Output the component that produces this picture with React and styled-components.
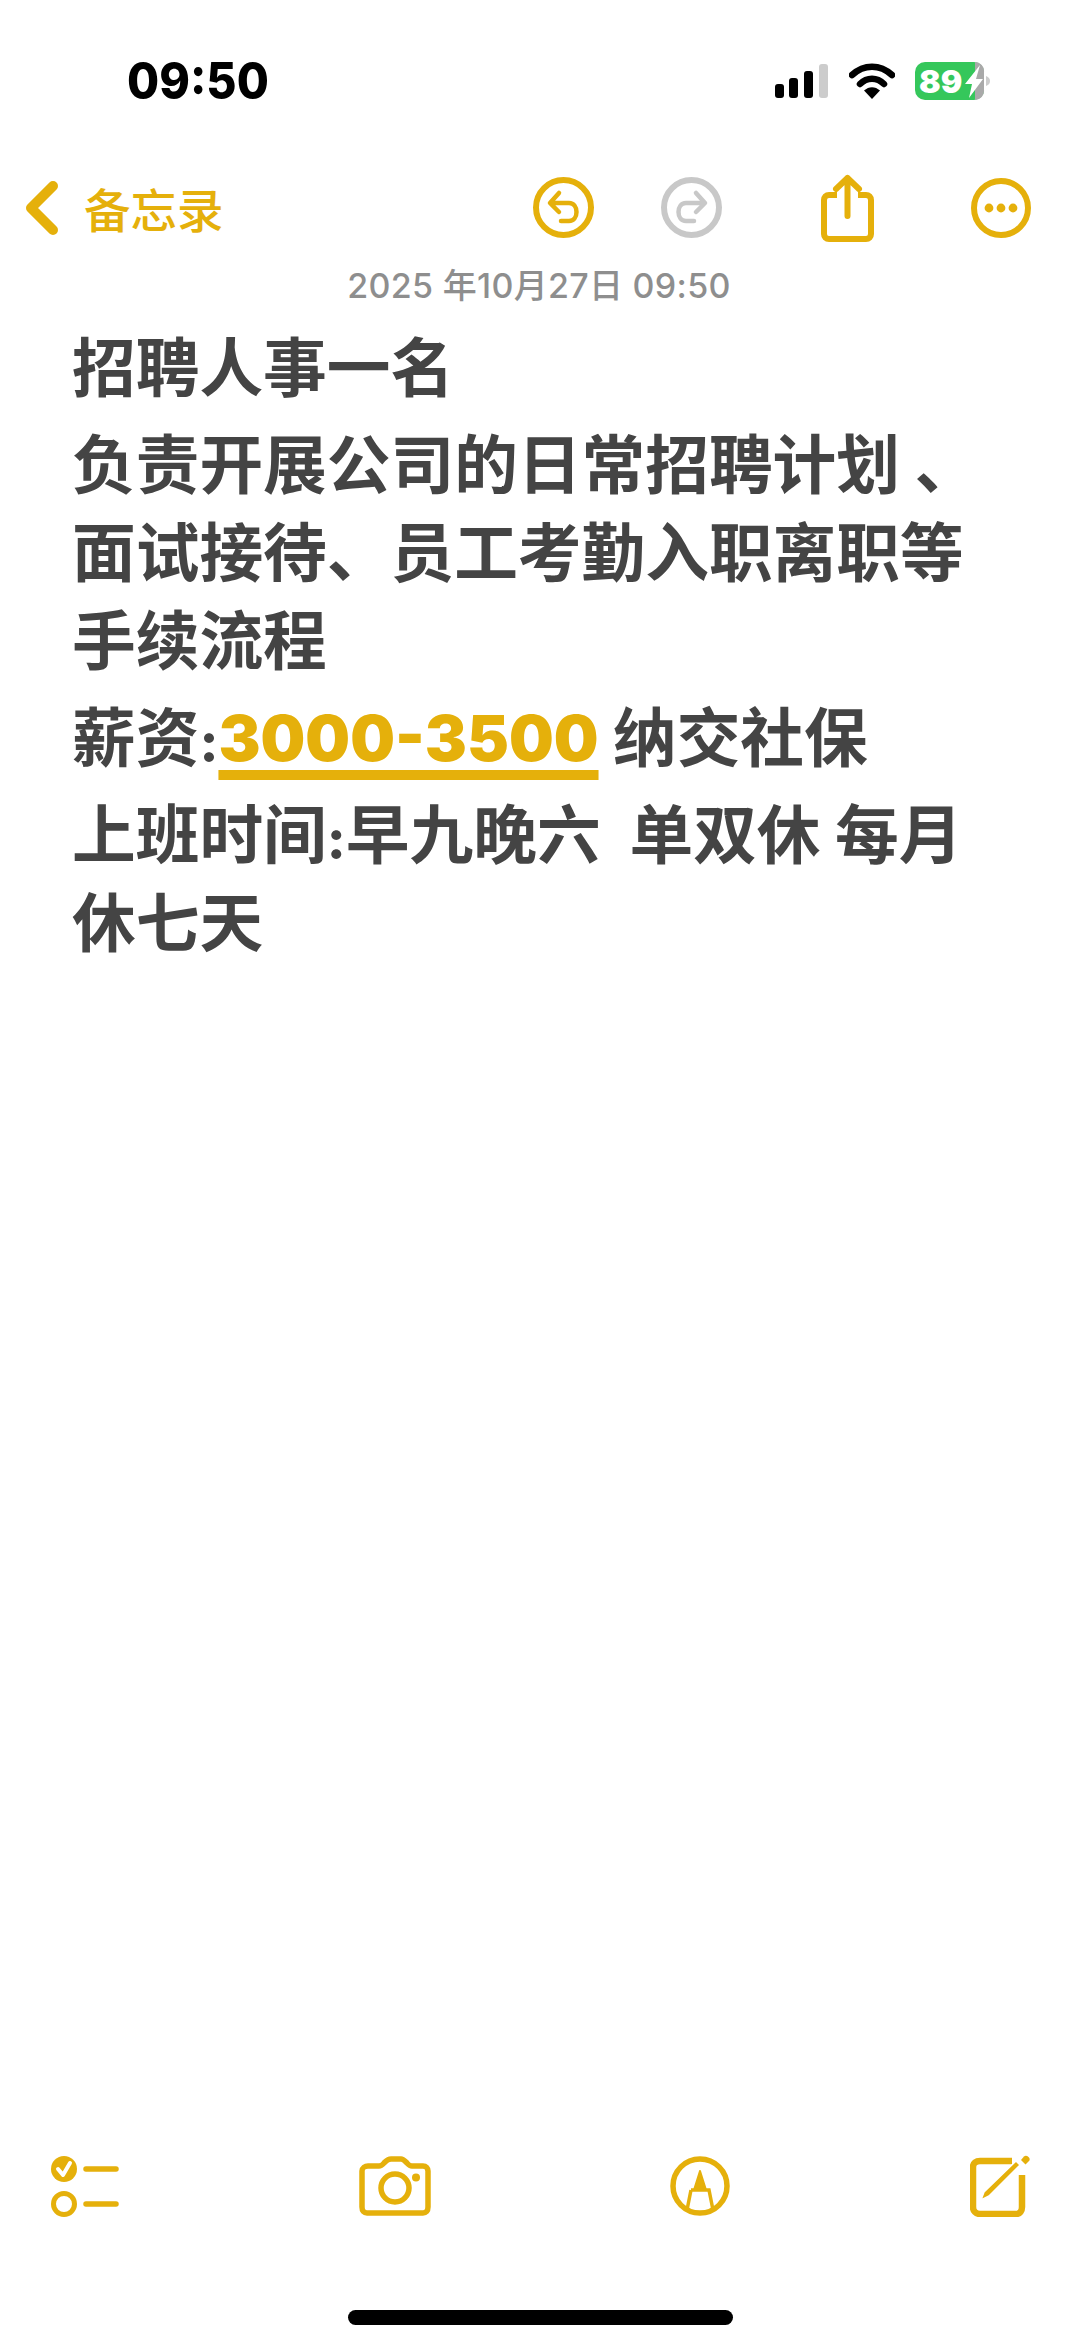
import React from "react";
import styled, { createGlobalStyle } from "styled-components";

const GOLD = "#E5B00B";
const Global = createGlobalStyle`
  html, body { margin: 0; padding: 0; background: #fff; }
`;
const Page = styled.div`
  width: 1080px; height: 2341px; display: flex; flex-direction: column; background: #fff; overflow: hidden;
  font-family: "Noto Sans CJK SC", sans-serif;
`;
const StatusBar = styled.div`
  height: 64px; padding-top: 49px; display: flex; align-items: center; padding-left: 127px;
`;
const Time = styled.div`
  font: 800 46.5px/64px Inter, sans-serif; color: #000; width: 140px; white-space: nowrap; transform: scaleY(1.08);
`;
const StatusIcons = styled.div`
  margin-left: 508px; display: flex; align-items: center;
`;
const NavBar = styled.div`
  margin-top: 55px; height: 79px; display: flex; align-items: center; padding-left: 25px;
`;
const Back = styled.div`
  display: flex; align-items: center; gap: 25px; color: ${GOLD}; font-size: 46.5px; font-weight: 500; line-height: 56px; width: 508px;
`;
const Icon = styled.svg`
  display: block; flex: none; margin-left: ${(p) => p.$ml || 0}px;
`;
const DateLine = styled.div`
  margin-top: 19px; height: 40px; text-align: center; color: #8e8e8e; letter-spacing: 0.3px;
  font: 500 34px/40px Inter, "Noto Sans CJK SC", sans-serif; white-space: nowrap; margin-left: -2px;
`;
const Note = styled.div`
  padding: 13px 0 0 72px; display: flex; flex-direction: column; gap: 9px; flex: 1;
`;
const Para = styled.div`
  font-size: 63.7px; line-height: 88px; height: ${(p) => p.$lines * 88}px; font-weight: 700; color: #444; white-space: pre;
`;
const Num = styled.span`
  font-family: Inter, sans-serif; font-weight: 900; font-size: 63px; line-height: 0; color: ${GOLD};
  text-decoration: underline; text-decoration-thickness: 10px; text-underline-offset: 9px;
`;
const Colon = styled.span`
  font-family: Inter, sans-serif; font-weight: 800; font-size: 54px; line-height: 0;
`;
const BottomBar = styled.div`
  height: 64px; margin-bottom: 92px; display: flex; align-items: center; padding-left: 51px;
`;
const HomeBar = styled.div`
  width: 385px; height: 15px; border-radius: 8px; background: #000; margin: 0 0 16px 348px;
`;

export default function App() {
  return (
    <Page>
      <Global />
      <StatusBar>
        <Time>09:50</Time>
        <StatusIcons>
          <Icon width="53" height="34" viewBox="0 0 53 34">
            <rect x="0" y="20" width="9" height="14" rx="3" fill="#000" />
            <rect x="14" y="14" width="9" height="20" rx="3" fill="#000" />
            <rect x="29" y="7" width="9" height="27" rx="3" fill="#000" />
            <rect x="44" y="0" width="9" height="34" rx="3" fill="#ccc" />
          </Icon>
          <Icon $ml={21} width="46" height="36" viewBox="0 0 46 36" fill="none">
            <path d="M3 12C15 1 31 1 43 12" stroke="#000" strokeWidth="6.5" strokeLinecap="round" />
            <path d="M11 21C18 14 28 14 35 21" stroke="#000" strokeWidth="6.5" strokeLinecap="round" />
            <path d="M15 27.5C20 23 26 23 31 27.5L23 36Z" fill="#000" />
          </Icon>
          <Icon $ml={20} width="76" height="38" viewBox="0 0 76 38">
            <rect x="0" y="0" width="69" height="38" rx="10" fill="#35C75B" />
            <path d="M60 0a9 9 0 0 1 9 10V28a9 9 0 0 1-9 10z" fill="#a9a9a9" />
            <text x="4" y="30.5" fontFamily="Inter, sans-serif" fontWeight="900" fontSize="32" fill="#fff">89</text>
            <path d="M65 3L50 22h7l-3 14L68 17h-7z" fill="#fff" />
            <path d="M71 14c3 1 4 3 4 5s-1 4-4 5z" fill="#ccc" />
          </Icon>
        </StatusIcons>
      </StatusBar>

      <NavBar>
        <Back>
          <Icon width="34" height="56" viewBox="0 0 34 56" fill="none">
            <path d="M28 6L6 28L28 50" stroke={GOLD} strokeWidth="10" strokeLinecap="round" strokeLinejoin="round" />
          </Icon>
          备忘录
        </Back>
        <Icon width="61" height="61" viewBox="0 0 61 61" fill="none" stroke={GOLD} strokeWidth="6">
          <circle cx="30.5" cy="30.5" r="27.5" />
          <path d="M26 16L17 26L26 35M18 26H36C46 26 46 44 36 44H28" strokeWidth="4.5" strokeLinecap="round" strokeLinejoin="round" />
        </Icon>
        <Icon $ml={67} width="61" height="61" viewBox="0 0 61 61" fill="none" stroke="#c8c8c8" strokeWidth="6">
          <circle cx="30.5" cy="30.5" r="27.5" />
          <path d="M35 16L44 26L35 35M43 26H25C15 26 15 44 25 44H33" strokeWidth="4.5" strokeLinecap="round" strokeLinejoin="round" />
        </Icon>
        <Icon $ml={99} width="53" height="68" viewBox="0 0 53 68" fill="none" stroke={GOLD} strokeWidth="6">
          <path d="M16 21H8C5 21 3 23 3 26V60C3 63 5 65 8 65H45C48 65 50 63 50 60V26C50 23 48 21 45 21H37" strokeLinejoin="round" />
          <path d="M26.5 42V4M15 15L26.5 4L38 15" strokeLinecap="round" strokeLinejoin="round" />
        </Icon>
        <Icon $ml={97} width="60" height="60" viewBox="0 0 60 60" fill="none" stroke={GOLD} strokeWidth="6">
          <circle cx="30" cy="30" r="27" />
          <g fill={GOLD} stroke="none">
            <circle cx="18" cy="30" r="4.4" />
            <circle cx="30" cy="30" r="4.4" />
            <circle cx="42" cy="30" r="4.4" />
          </g>
        </Icon>
      </NavBar>

      <DateLine>2025 年10月27日 09:50</DateLine>

      <Note>
        <Para $lines={1}>招聘人事一名</Para>
        <Para $lines={3}>
          负责开展公司的日常招聘计划 、<br />
          面试接待、员工考勤入职离职等<br />
          手续流程
        </Para>
        <Para $lines={1}>
          薪资<Colon>:</Colon><Num>3000-3500</Num> 纳交社保
        </Para>
        <Para $lines={2}>
          上班时间<Colon>:</Colon>早九晚六  单双休 每月<br />
          休七天
        </Para>
      </Note>

      <BottomBar>
        <Icon width="68" height="63" viewBox="0 0 68 63" fill="none">
          <circle cx="13" cy="14" r="13" fill={GOLD} />
          <path d="M7 14L12 20L19 8" stroke="#fff" strokeWidth="4" strokeLinecap="round" strokeLinejoin="round" />
          <circle cx="13" cy="49" r="10.5" stroke={GOLD} strokeWidth="5" />
          <path d="M35 14H65M35 49H65" stroke={GOLD} strokeWidth="5.5" strokeLinecap="round" />
        </Icon>
        <Icon $ml={240} width="72" height="60" viewBox="0 0 72 60" fill="none" stroke={GOLD} strokeWidth="5.5">
          <path d="M9 10H20C23 10 24 8 26 6C28 4 29 3 32 3H42C44 3 45 4 47 6C49 8 50 10 53 10H64C67 10 69 12 69 15V51C69 55 67 57 64 57H8C5 57 3 55 3 51V15C3 12 6 10 9 10Z" strokeLinejoin="round" />
          <circle cx="36" cy="32" r="14" />
          <circle cx="57" cy="21.5" r="4" fill={GOLD} stroke="none" />
        </Icon>
        <Icon $ml={239} width="60" height="62" viewBox="0 0 60 62" fill="none" stroke={GOLD} strokeWidth="5.5">
          <circle cx="30" cy="31" r="27" />
          <path d="M30 16L24 35H36Z" fill={GOLD} strokeWidth="2" strokeLinejoin="round" />
          <path d="M21 35H39L43 55M21 35L17 55" strokeWidth="3.5" />
        </Icon>
        <Icon $ml={240} width="60" height="62" viewBox="0 0 60 62" fill="none">
          <path d="M42 6H10C6 6 3 8 3 12V52C3 56 6 59 10 59H46C50 59 52 56 52 52V20" stroke={GOLD} strokeWidth="6.5" />
          <path d="M50 10L19 41L11 45L14 37L46 6Z" fill={GOLD} stroke="#fff" strokeWidth="1.5" />
          <path d="M51 5L54 1.5C55 0.5 57 0.5 58.5 2C60 3.5 60 5 59 6L55.5 9.5Z" fill={GOLD} />
        </Icon>
      </BottomBar>
      <HomeBar />
    </Page>
  );
}
